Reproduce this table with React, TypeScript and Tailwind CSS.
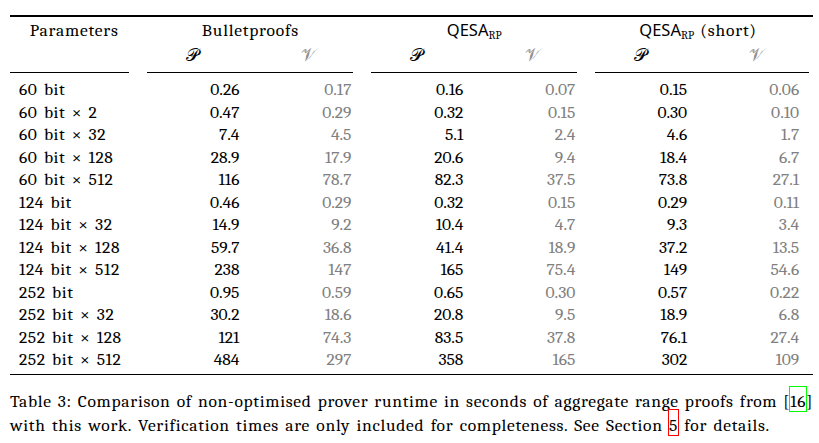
import type { FC } from "react";

const rows: string[][] = [
  ["60 bit", "0.26", "0.17", "0.16", "0.07", "0.15", "0.06"],
  ["60 bit × 2", "0.47", "0.29", "0.32", "0.15", "0.30", "0.10"],
  ["60 bit × 32", "7.4", "4.5", "5.1", "2.4", "4.6", "1.7"],
  ["60 bit × 128", "28.9", "17.9", "20.6", "9.4", "18.4", "6.7"],
  ["60 bit × 512", "116", "78.7", "82.3", "37.5", "73.8", "27.1"],
  ["124 bit", "0.46", "0.29", "0.32", "0.15", "0.29", "0.11"],
  ["124 bit × 32", "14.9", "9.2", "10.4", "4.7", "9.3", "3.4"],
  ["124 bit × 128", "59.7", "36.8", "41.4", "18.9", "37.2", "13.5"],
  ["124 bit × 512", "238", "147", "165", "75.4", "149", "54.6"],
  ["252 bit", "0.95", "0.59", "0.65", "0.30", "0.57", "0.22"],
  ["252 bit × 32", "30.2", "18.6", "20.8", "9.5", "18.9", "6.8"],
  ["252 bit × 128", "121", "74.3", "83.5", "37.8", "76.1", "27.4"],
  ["252 bit × 512", "484", "297", "358", "165", "302", "109"],
];

const Qesa: FC = () => (
  <span className="[word-spacing:0]">
    <span className="font-sans text-[16.5px] tracking-normal">QESA</span>
    <span className="relative top-[3.5px] text-[11.5px] tracking-normal">RP</span>
  </span>
);

const Group: FC<{ p: string; v: string; last?: boolean }> = ({ p, v, last }) => (
  <div className={`ml-[18px] flex ${last ? "w-[215px]" : "w-[207px]"}`}>
    <span className="w-[92px] text-right">{p}</span>
    <span className="w-[112px] text-right text-[#808080]">{v}</span>
  </div>
);

const SubHead: FC<{ last?: boolean }> = ({ last }) => (
  <div className={`ml-[18px] grid grid-cols-[154px_1fr] ${last ? "w-[215px]" : "w-[207px]"}`}>
    <span className="pl-[39px]">𝒫</span>
    <span className="text-[#909090]">𝒱</span>
  </div>
);

const LinkBox: FC<{ text: string; color: string }> = ({ text, color }) => (
  <span className="relative">
    {text}
    <span
      className={`absolute left-[-1px] right-[-1px] top-[-5.5px] bottom-[-1px] border ${color}`}
    />
  </span>
);

export default function App() {
  return (
    <div className="w-[819px] h-[443px] bg-white px-[10px] pt-[15px] font-serif font-['Liberation_Serif'] text-[17.5px] text-black overflow-hidden">
      <div className="w-[803px] h-[1.5px] bg-black" />

      <div className="mt-[2.25px] leading-[22.5px]">
        <div className="flex tracking-[0.8px] [word-spacing:1.5px]">
          <div className="w-[120px] pl-[9px] text-center">Parameters</div>
          <div className="ml-[18px] w-[207px] text-center">Bulletproofs</div>
          <div className="ml-[18px] w-[207px] text-center">
            <Qesa />
          </div>
          <div className="ml-[18px] w-[215px] pr-[8px] text-center">
            <Qesa /> (short)
          </div>
        </div>
        <div className="flex">
          <div className="w-[120px]" />
          <SubHead />
          <SubHead />
          <SubHead last />
        </div>
      </div>

      <div className="mt-[5.25px] flex">
        <div className="w-[120px] h-px bg-black" />
        <div className="ml-[18px] w-[207px] h-px bg-black" />
        <div className="ml-[18px] w-[207px] h-px bg-black" />
        <div className="ml-[18px] w-[215px] h-px bg-black" />
      </div>

      <div className="mt-[5.25px] leading-[22.5px]">
        {rows.map(([label, ...vals]) => (
          <div key={label} className="flex">
            <div className="w-[120px] pl-[9px] whitespace-nowrap tracking-[0.6px] [word-spacing:2px]">
              {label}
            </div>
            <Group p={vals[0]} v={vals[1]} />
            <Group p={vals[2]} v={vals[3]} />
            <Group p={vals[4]} v={vals[5]} last />
          </div>
        ))}
      </div>

      <div className="mt-[2.75px] w-[803px] h-[1.5px] bg-black" />

      <div className="mt-[15.4px] w-[803px] leading-[23.5px] tracking-[0.7px]">
        <p className="w-[803px] whitespace-nowrap text-justify [text-align-last:justify]">
          Table 3: Comparison of non-optimised prover runtime in seconds of aggregate range
          proofs from [<LinkBox text="16" color="border-[#00ff00]" />]
        </p>
        <p className="whitespace-nowrap [word-spacing:1.8px]">
          with this work. Verification times are only included for completeness. See Section{" "}
          <LinkBox text="5" color="border-[#ff0000]" /> for details.
        </p>
      </div>
    </div>
  );
}
